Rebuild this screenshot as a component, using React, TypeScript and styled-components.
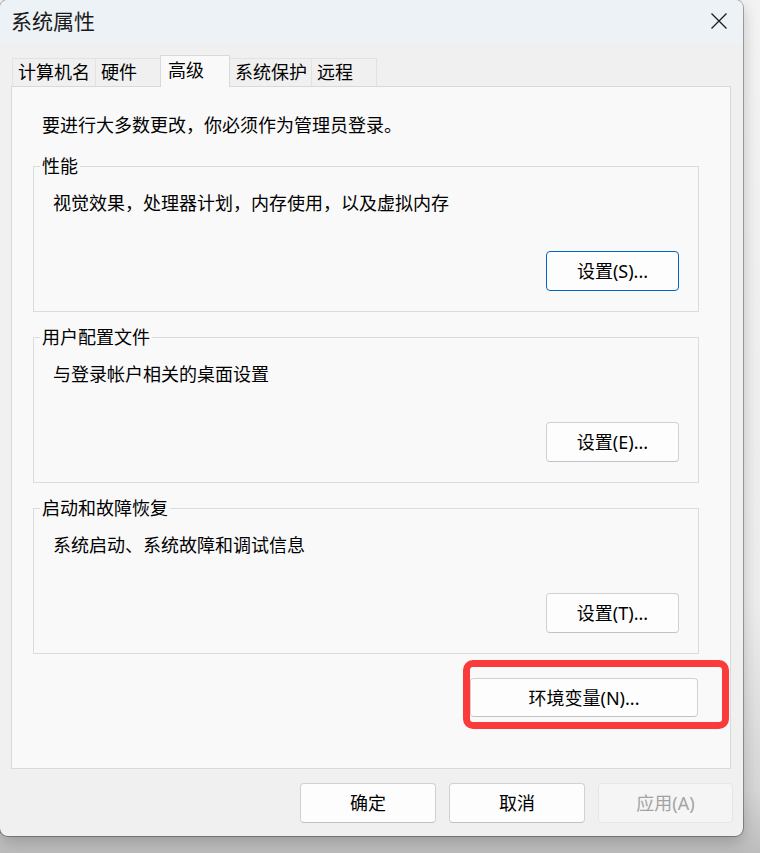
import React from "react";
import styled, { createGlobalStyle } from "styled-components";

const GlobalStyle = createGlobalStyle`
  html, body { margin: 0; padding: 0; height: 100%; }
  body {
    background: linear-gradient(to bottom, #f3f3f3 0px, #ededed 600px, #d6d6d6 790px, #c4c4c4 836px, #bcbcbc 853px);
    font-family: "Noto Sans", "Noto Sans CJK SC", sans-serif;
    overflow: hidden;
  }
  *, *::before, *::after { box-sizing: border-box; }
`;

const Window = styled.div`
  width: 743px;
  height: 836px;
  display: flex;
  flex-direction: column;
  background: #f0f0f0;
  border-radius: 8px;
  overflow: hidden;
  box-shadow: 0 0 0 1px rgba(0, 0, 0, 0.3), 0 6px 16px rgba(0, 0, 0, 0.22);
`;

const TitleBar = styled.div`
  height: 43px;
  flex: none;
  display: flex;
  align-items: center;
  justify-content: space-between;
  padding: 0 16px 2px 11px;
  background: #ecf2f6;
`;

const Title = styled.div`
  font-size: 21px;
  line-height: 28px;
  color: #1a1a1a;
`;

const CloseButton = styled.div`
  width: 16px;
  height: 16px;
  display: flex;
  align-items: center;
  justify-content: center;
`;

const Body = styled.div`
  flex: 1;
  display: flex;
  flex-direction: column;
  padding: 12px 10px 13px 11px;
`;

const TabStrip = styled.div`
  height: 31px;
  display: flex;
  align-items: flex-end;
  padding-left: 1px;
`;

const Tab = styled.div<{ $active?: boolean; $w: number }>`
  position: relative;
  z-index: ${(p) => (p.$active ? 2 : 1)};
  width: ${(p) => p.$w}px;
  height: ${(p) => (p.$active ? 32 : 28)}px;
  margin-bottom: ${(p) => (p.$active ? -1 : 0)}px;
  margin-left: -1px;
  &:first-child { margin-left: 0; }
  padding-left: ${(p) => (p.$active ? 7 : 5)}px;
  background: ${(p) => (p.$active ? "#f9f9f9" : "#f0f0f0")};
  border: 1px solid ${(p) => (p.$active ? "#d9d9d9" : "#e2e2e2")};
  border-bottom: none;
  font-size: 18px;
  line-height: ${(p) => (p.$active ? 29 : 27)}px;
  color: #000;
  white-space: nowrap;
`;

const Panel = styled.div`
  width: 720px;
  height: 683px;
  flex: none;
  display: flex;
  flex-direction: column;
  background: #f9f9f9;
  border: 1px solid #d9d9d9;
  padding: 26px 31px 0 21px;
`;

const Intro = styled.div`
  font-size: 18px;
  line-height: 24px;
  padding-left: 9px;
  color: #000;
`;

const GroupBox = styled.fieldset<{ $first?: boolean }>`
  margin: ${(p) => (p.$first ? 17 : 13)}px 0 0 0;
  padding: 0;
  min-width: 0;
  border: 1px solid #dcdcdc;
`;

const Legend = styled.legend`
  margin-left: 6px;
  padding: 0 2px;
  font-size: 18px;
  line-height: 24px;
  color: #000;
`;

const GroupContent = styled.div`
  display: flex;
  flex-direction: column;
  padding: 13px 19px 20px 19px;
`;

const GroupText = styled.div`
  font-size: 18px;
  line-height: 24px;
  color: #000;
`;

const ButtonRow = styled.div`
  display: flex;
  justify-content: flex-end;
  margin-top: 36px;
`;

const Button = styled.button<{ $w: number; $h?: number; $primary?: boolean }>`
  width: ${(p) => p.$w}px;
  height: ${(p) => p.$h ?? 40}px;
  padding: 0;
  border-radius: 4px;
  border: 1px solid ${(p) => (p.$primary ? "#0067c0" : "#d1d1d1")};
  border-bottom-color: ${(p) => (p.$primary ? "#0067c0" : "#c2c2c2")};
  background: #fdfdfd;
  font-family: "Noto Sans", "Noto Sans CJK SC", sans-serif;
  font-size: 18px;
  line-height: 24px;
  color: #000;
  &:disabled {
    background: #f5f5f5;
    border-color: #e6e6e6;
    color: #a3a3a3;
  }
`;

const EnvRow = styled.div`
  display: flex;
  justify-content: flex-end;
  margin-top: 24px;
  padding-right: 1px;
`;

const EnvWrap = styled.div`
  position: relative;
  display: flex;
`;

const Highlight = styled.div`
  position: absolute;
  left: -7px;
  top: -18px;
  right: -31px;
  bottom: -12px;
  border: 7px solid #fa3b3b;
  border-radius: 10px;
  pointer-events: none;
`;

const Footer = styled.div`
  display: flex;
  justify-content: flex-end;
  gap: 13px;
  margin-top: 14px;
`;

const groups = [
  { title: "性能", text: "视觉效果，处理器计划，内存使用，以及虚拟内存", button: "设置(S)...", primary: true },
  { title: "用户配置文件", text: "与登录帐户相关的桌面设置", button: "设置(E)...", primary: false },
  { title: "启动和故障恢复", text: "系统启动、系统故障和调试信息", button: "设置(T)...", primary: false },
];

const tabs = [
  { label: "计算机名", w: 84 },
  { label: "硬件", w: 66 },
  { label: "高级", w: 70, active: true },
  { label: "系统保护", w: 83 },
  { label: "远程", w: 66 },
];

export default function App() {
  return (
    <>
      <GlobalStyle />
      <Window>
        <TitleBar>
          <Title>系统属性</Title>
          <CloseButton>
            <svg width="16" height="16" viewBox="0 0 16 16">
              <path d="M0.5 0.5 L15.5 15.5 M15.5 0.5 L0.5 15.5" stroke="#1b1b1b" strokeWidth="1.25" fill="none" />
            </svg>
          </CloseButton>
        </TitleBar>
        <Body>
          <TabStrip>
            {tabs.map((t) => (
              <Tab key={t.label} $w={t.w} $active={t.active}>
                {t.label}
              </Tab>
            ))}
          </TabStrip>
          <Panel>
            <Intro>要进行大多数更改，你必须作为管理员登录。</Intro>
            {groups.map((g, i) => (
              <GroupBox key={g.title} $first={i === 0}>
                <Legend>{g.title}</Legend>
                <GroupContent>
                  <GroupText>{g.text}</GroupText>
                  <ButtonRow>
                    <Button $w={133} $primary={g.primary}>{g.button}</Button>
                  </ButtonRow>
                </GroupContent>
              </GroupBox>
            ))}
            <EnvRow>
              <EnvWrap>
                <Button $w={228} $h={39}>环境变量(N)...</Button>
                <Highlight />
              </EnvWrap>
            </EnvRow>
          </Panel>
          <Footer>
            <Button $w={136}>确定</Button>
            <Button $w={136}>取消</Button>
            <Button $w={135} disabled>应用(A)</Button>
          </Footer>
        </Body>
      </Window>
    </>
  );
}
